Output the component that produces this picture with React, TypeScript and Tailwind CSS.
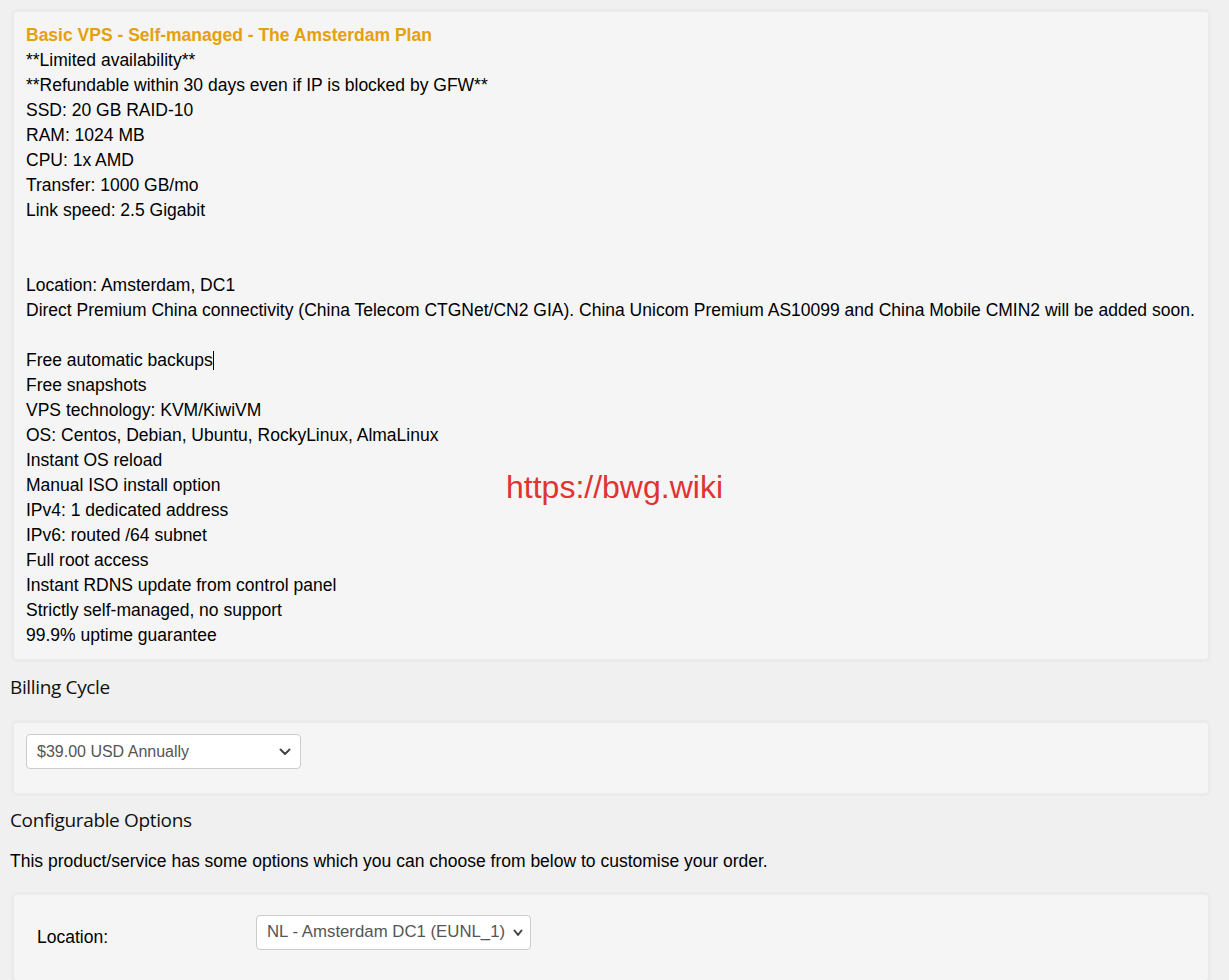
import React from "react";

const lines: string[] = [
  "**Limited availability**",
  "**Refundable within 30 days even if IP is blocked by GFW**",
  "SSD: 20 GB RAID-10",
  "RAM: 1024 MB",
  "CPU: 1x AMD",
  "Transfer: 1000 GB/mo",
  "Link speed: 2.5 Gigabit",
  "",
  "",
  "Location: Amsterdam, DC1",
  "Direct Premium China connectivity (China Telecom CTGNet/CN2 GIA). China Unicom Premium AS10099 and China Mobile CMIN2 will be added soon.",
  "",
  "Free automatic backups|",
  "Free snapshots",
  "VPS technology: KVM/KiwiVM",
  "OS: Centos, Debian, Ubuntu, RockyLinux, AlmaLinux",
  "Instant OS reload",
  "Manual ISO install option",
  "IPv4: 1 dedicated address",
  "IPv6: routed /64 subnet",
  "Full root access",
  "Instant RDNS update from control panel",
  "Strictly self-managed, no support",
  "99.9% uptime guarantee",
];

function Chevron({ w }: { w: number }) {
  return (
    <svg width={w} height="8" viewBox={`0 0 ${w} 8`} className="pointer-events-none shrink-0">
      <path d={`M1.5 1.5 L${w / 2} 6 L${w - 1.5} 1.5`} fill="none" stroke="#444" strokeWidth="2" strokeLinecap="round" strokeLinejoin="round" />
    </svg>
  );
}

function Select({ value, width, size, chev, pr }: { value: string; width: string; size: string; chev: number; pr: string }) {
  return (
    <div className={`${width} ${pr} h-[35px] bg-white border border-[#cccccc] rounded-[4px] flex items-center justify-between pl-[10px]`}>
      <span className={`${size} text-[#555555] leading-none whitespace-nowrap`}>{value}</span>
      <Chevron w={chev} />
    </div>
  );
}

export default function App() {
  return (
    <div
      className="relative w-[1229px] h-[980px] overflow-hidden bg-[#f0f0f0] pl-[10px] pr-[18px] text-[#000]"
      style={{ fontFamily: '"Liberation Sans", Arial, sans-serif' }}
    >
      {/* Product card */}
      <div className="ml-px mt-[9px] bg-[#f5f5f5] border-[3px] border-[#ebebeb] rounded-[6px] pt-[11px] pb-[11px] px-[12px]">
        <div className="text-[17.5px] leading-[25px] font-bold text-[#e5a00d]">
          Basic VPS - Self-managed - The Amsterdam Plan
        </div>
        {lines.map((l, i) => (
          <div key={i} className="text-[17.5px] leading-[25px] h-[25px] whitespace-nowrap">
            {l.endsWith("|") ? (
              <>
                {l.slice(0, -1)}
                <span className="inline-block w-px h-[19px] bg-black align-[-4px]" />
              </>
            ) : (
              l
            )}
          </div>
        ))}
      </div>

      {/* Billing cycle */}
      <h2
        className="mt-[11px] mb-[19px] text-[19px] leading-[28px] text-[#111] tracking-[-0.35px]"
        style={{ fontFamily: '"Open Sans", "Noto Sans", sans-serif' }}
      >
        Billing Cycle
      </h2>
      <div className="ml-px bg-[#f5f5f5] border-[3px] border-[#ebebeb] rounded-[6px] pt-[11px] pb-[24px] px-[12px]">
        <Select value="$39.00 USD Annually" width="w-[275px]" size="text-[16px]" chev={12} pr="pr-[9px]" />
      </div>

      {/* Configurable options */}
      <h2
        className="mt-[10px] text-[19px] leading-[28px] text-[#111] tracking-[-0.35px]"
        style={{ fontFamily: '"Open Sans", "Noto Sans", sans-serif' }}
      >
        Configurable Options
      </h2>
      <p className="mt-[15px] mb-[18px] text-[17.5px] leading-[25px]">
        This product/service has some options which you can choose from below to customise your order.
      </p>
      <div className="ml-px bg-[#f5f5f5] border-[3px] border-[#ebebeb] rounded-[6px] pt-[20px] pb-[30px] px-[12px]">
        <div className="flex items-center">
          <div className="w-[230px] pl-[11px] pt-[9px] text-[17.5px]">Location:</div>
          <Select value="NL - Amsterdam DC1 (EUNL_1)" width="w-[275px]" size="text-[16.8px]" chev={10} pr="pr-[7px]" />
        </div>
      </div>

      {/* Watermark */}
      <div className="absolute left-0 right-0 top-[469px] flex justify-center pointer-events-none">
        <span className="text-[32px] leading-[36px] text-[#e03333]">https://bwg.wiki</span>
      </div>
    </div>
  );
}
